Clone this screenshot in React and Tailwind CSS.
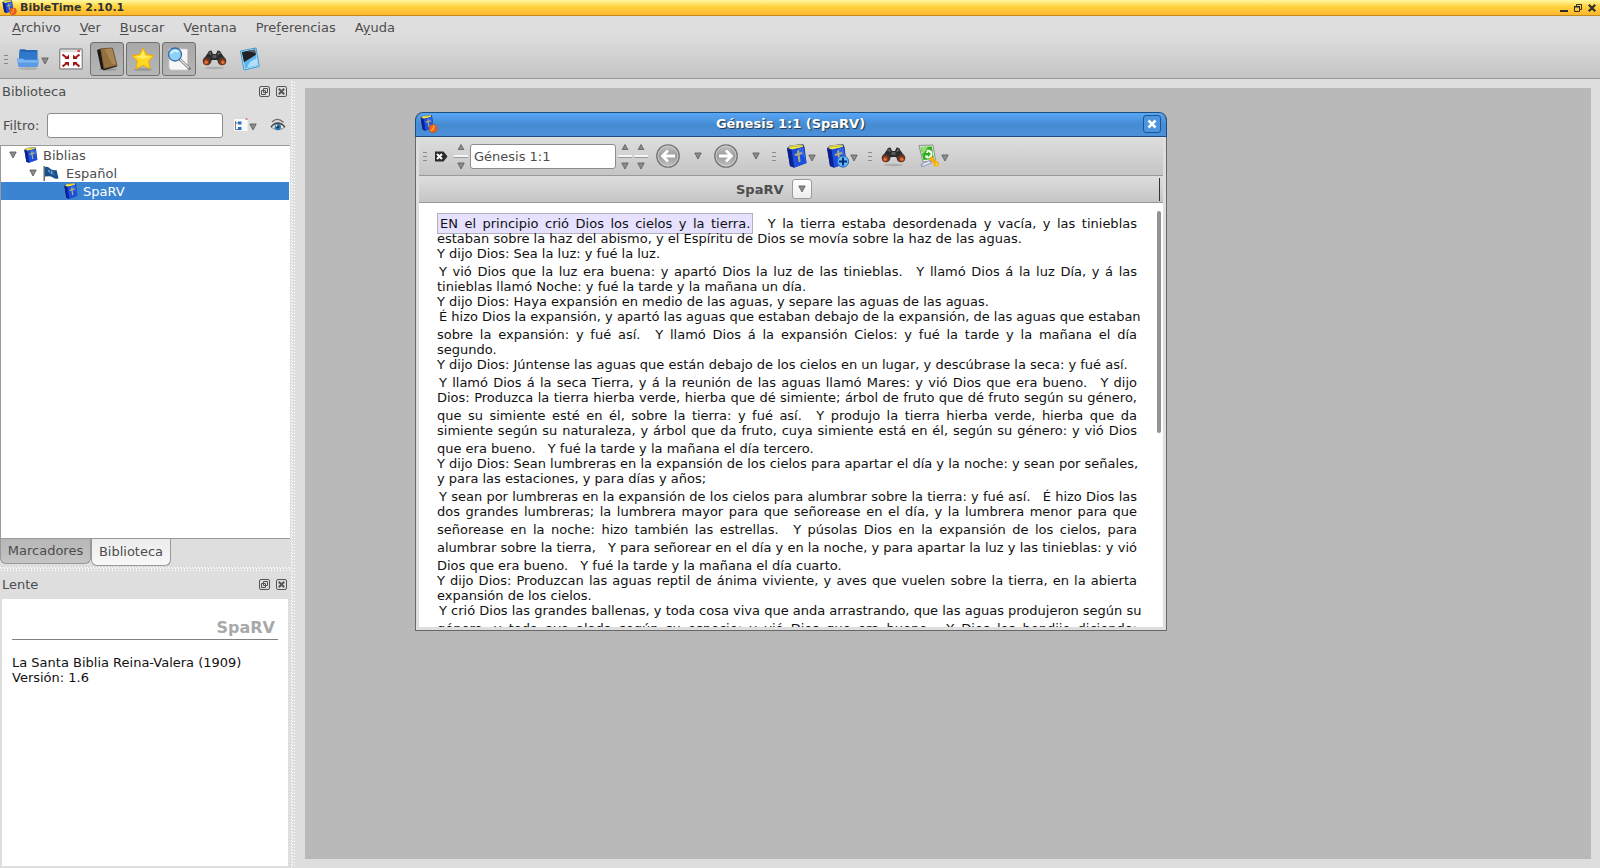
import React from "react";

function BookShape() {
  return (
    <>
      <path d="M1 4 L4 1.500 L17 0 L18.500 3 L20.500 19 L8 23.800 L4 22 Z" fill="#152a98" />
      <path d="M2 4 L4.500 1.500 L16.500 0.500 L17 3 L6 5.500 Z" fill="#f6ec4c" />
      <path d="M3.500 3.200 L16.500 1.500" stroke="#a8a23a" strokeWidth="0.700" />
      <path d="M5.500 6 L17.500 3 L20.500 19 L8 23.500 Z" fill="#1b4fdf" />
      <path d="M1 4 L5.500 6 L8 23.500 L4 22 Z" fill="#0d2190" />
      <path d="M11 5 L17.500 3.400 L19.600 15 Z" fill="#4578ee" opacity="0.550" />
      <path d="M12 6.500 L13.600 18 M8.800 11 L16.200 9" stroke="#b3ad7c" strokeWidth="2" fill="none" />
    </>
  );
}

function BookIcon({ className }) {
  return (
    <svg viewBox="0 0 22 24" className={className} aria-hidden="true">
      <BookShape />
    </svg>
  );
}

function AppIcon({ className }) {
  return (
    <svg viewBox="0 0 24 24" className={className} aria-hidden="true">
      <g transform="scale(0.88)">
        <BookShape />
      </g>
      <circle cx="17.500" cy="18" r="5.500" fill="#f0611c" stroke="#ad4f32" strokeWidth="0.800" />
      <path d="M18.500 14 L17.500 18.500 L14.500 21" stroke="#ffc23d" strokeWidth="1.500" fill="none" />
    </svg>
  );
}

function BookPlusIcon() {
  return (
    <svg viewBox="0 0 24 24" className="h-6 w-6" aria-hidden="true">
      <BookShape />
      <circle cx="17" cy="17.500" r="5.600" fill="#69b9f4" stroke="#1b65c2" />
      <path d="M17 13.500 V21.500 M13 17.500 H21" stroke="#052e7a" strokeWidth="2" />
    </svg>
  );
}

function DrawerIcon() {
  return (
    <svg viewBox="0 0 24 24" className="h-6 w-6" aria-hidden="true">
      <ellipse cx="12" cy="21.500" rx="10" ry="1.500" fill="#9d9d9d" opacity="0.600" />
      <path d="M3.500 3 Q3.500 2.300 4.500 2.300 H9 L10 3 H20.500 Q21.500 3 21.500 4 V13 H3 Z" fill="#2566b5" />
      <path d="M3.500 5 H21 V12.500 H3.300 Z" fill="#2f78cc" />
      <path d="M1 11.500 H7 L8.500 12.500 H23 L22 19 Q21.800 20 20.500 20 H3.500 Q2.400 20 2.200 19 Z" fill="#5b9be6" />
      <path d="M1.500 12 H6.700 L8.300 13.200 H22.400 L22 15.500 H2 Z" fill="#7fb5f2" />
    </svg>
  );
}

function FullscreenIcon() {
  return (
    <svg viewBox="0 0 24 22" className="h-[22px] w-6" aria-hidden="true">
      <rect x="0.700" y="1" width="22.600" height="20" rx="1" fill="#fff" stroke="#8e8e8e" strokeWidth="1.400" />
      <path d="M2 3.200 H22" stroke="#ddd" strokeWidth="2" />
      <rect x="18.500" y="2" width="2.500" height="2" fill="#d54d4d" />
      <path d="M10 6.500 V11 H5.500 Z M14 6.500 V11 H18.500 Z M10 18.500 V14 H5.500 Z M14 18.500 V14 H18.500 Z" fill="#a41313" />
      <path d="M3.500 6.500 L8.500 10.500 M20.500 6.500 L15.500 10.500 M3.500 18.500 L8.500 14.500 M20.500 18.500 L15.500 14.500" stroke="#a41313" strokeWidth="2" />
    </svg>
  );
}

function BrownBookIcon() {
  return (
    <svg viewBox="0 0 24 24" className="h-6 w-6" aria-hidden="true">
      <ellipse cx="13" cy="22.500" rx="9" ry="1.200" fill="#666" opacity="0.400" />
      <path d="M2 3 L5.500 1.800 L9 22 L6 22 Z" fill="#191613" />
      <path d="M5.500 1.800 L17.500 1 L22 18.500 L9 22 Z" fill="#96713f" stroke="#574022" strokeWidth="0.700" />
      <path d="M9.500 2 L17 1.500 L21 17.500 L17 17 Z" fill="#b6935d" opacity="0.600" />
      <path d="M6.500 22.200 L22 18.400 V19.600 L9 23.200 Z" fill="#27211b" />
    </svg>
  );
}

function StarIcon() {
  return (
    <svg viewBox="0 0 24 24" className="h-6 w-6" aria-hidden="true">
      <ellipse cx="12" cy="22.500" rx="9" ry="1.300" fill="#666" opacity="0.400" />
      <path d="M12 1 L15.300 7.500 L23 8.600 L17.600 14 L19 22 L12 18.300 L5 22 L6.400 14 L1 8.600 L8.700 7.500 Z" fill="#ffd91f" stroke="#eda90c" strokeLinejoin="round" />
      <path d="M12 3.500 L14.300 9 L20 9.800 L12 12 L4 9.500 L9.600 8.800 Z" fill="#fff176" opacity="0.800" />
    </svg>
  );
}

function MagnifierIcon() {
  return (
    <svg viewBox="0 0 24 24" className="h-6 w-6" aria-hidden="true">
      <path d="M2 2 H20.500 V23 H4 L2 21 Z" fill="#f7f7f7" stroke="#c9c9c9" strokeWidth="0.700" />
      <path d="M12.500 12 L22.500 21.500" stroke="#707070" strokeWidth="2.600" strokeLinecap="round" />
      <path d="M13 12.300 L22 21" stroke="#e8e8e8" strokeWidth="1.200" />
      <circle cx="8" cy="7.500" r="6.500" fill="#8fd0f5" stroke="#376ca8" strokeWidth="1.300" />
      <path d="M4 7 A4.500 4.500 0 0 1 11.500 5" stroke="#d9f2ff" strokeWidth="2" fill="none" />
    </svg>
  );
}

function BinocularsIcon() {
  return (
    <svg viewBox="0 0 25 22" className="h-[22px] w-[25px]" aria-hidden="true">
      <ellipse cx="12.500" cy="20" rx="10" ry="1.200" fill="#888" opacity="0.450" />
      <path d="M5.500 5.500 L7 3 L9.500 2.500 L11 6 H14 L15.500 2.500 L18 3 L19.500 5.500 L24 12 L20 15 L14.500 12 H10.500 L5 15 L1 12 Z" fill="#2b2b2b" />
      <path d="M6.500 5.500 L8.300 4.500 L9 7 M18.500 5.500 L16.700 4.500 L16 7" stroke="#777" strokeWidth="1" fill="none" />
      <rect x="10.500" y="7" width="4" height="3" fill="#585858" />
      <circle cx="5" cy="13" r="4.300" fill="#363636" />
      <circle cx="20" cy="13" r="4.300" fill="#363636" />
      <circle cx="4.500" cy="13.800" r="3.200" fill="#8c3514" />
      <circle cx="20.500" cy="13.800" r="3.200" fill="#8c3514" />
      <circle cx="4.200" cy="14.300" r="1.700" fill="#dc7440" />
      <circle cx="20.800" cy="14.300" r="1.700" fill="#dc7440" />
    </svg>
  );
}

function TiltedCardIcon() {
  return (
    <svg viewBox="0 0 22 24" className="h-6 w-[22px]" aria-hidden="true">
      <path d="M1.500 4 L17 1 L20.300 19.500 L5 23 Z" fill="#b9e2fa" stroke="#3b9bd2" strokeWidth="1" />
      <path d="M2.800 5 L16 2.500 L17 8 L5 15.500 Z" fill="#1f2328" />
      <path d="M8 4 L16 2.500 L16.600 6 Z" fill="#59636e" />
      <path d="M17 8 L5 15.500 L6 21.500 L19 18.500 Z" fill="#5eb4f0" />
      <path d="M11 15 L17.800 11 L18.800 18 L8 20.600 Z" fill="#d4f0ff" opacity="0.700" />
    </svg>
  );
}

function FlagIcon() {
  return (
    <svg viewBox="0 0 16 16" className="h-4 w-4" aria-hidden="true">
      <path d="M1.200 1 V16" stroke="#555" strokeWidth="1.300" />
      <path d="M2 2 Q5 1 7 3.500 T13.500 5 L15.500 13.500 Q12 14.500 10 12.500 T2 11.500 Z" fill="#15508c" />
      <path d="M4 4 L9 5.500 L13 11 L8 9.500 Z" fill="#3a77b3" opacity="0.700" />
      <path d="M5 5 L6.500 7.500 M9 6 L8.500 9" stroke="#a6c6e0" strokeWidth="0.800" />
    </svg>
  );
}

function ListIcon() {
  return (
    <svg viewBox="0 0 16 16" className="h-4 w-4" aria-hidden="true">
      <rect x="0.500" y="1.500" width="14.500" height="13" fill="#fafafa" stroke="#d2d2d2" strokeWidth="0.600" />
      <rect x="12.500" y="1.500" width="2" height="1.200" fill="#d94b4b" />
      <path d="M2.500 4 V12.500 H5 M2.500 6 H5" stroke="#555" strokeWidth="0.800" fill="none" />
      <rect x="5" y="4.500" width="3.500" height="3" fill="#2373cc" />
      <rect x="5" y="10" width="3.500" height="3" fill="#2373cc" />
    </svg>
  );
}

function EyeIcon() {
  return (
    <svg viewBox="0 0 16 16" className="h-4 w-4" aria-hidden="true">
      <path d="M2 5 Q7.500 -0.500 13.500 5.500" stroke="#6c6c6c" strokeWidth="1.300" fill="none" />
      <path d="M1 10 Q7.500 2 15 10 Q8 15.500 1 10 Z" fill="#e8e8e8" stroke="#777" strokeWidth="0.800" />
      <path d="M1 10 Q7.500 2 15 10" stroke="#444" strokeWidth="1.500" fill="none" />
      <circle cx="7.800" cy="10" r="3.200" fill="#2c7ab5" />
      <circle cx="7.800" cy="10" r="1.400" fill="#112c42" />
      <circle cx="6.600" cy="8.700" r="0.900" fill="#fff" />
    </svg>
  );
}

function ClearIcon() {
  return (
    <svg viewBox="0 0 14 11" className="h-[11px] w-[14px]" aria-hidden="true">
      <path d="M1 0.500 H9.500 L13.500 5.500 L9.500 10.500 H1 Z" fill="#2b2b2b" />
      <path d="M3 3 L8 8 M8 3 L3 8" stroke="#fff" strokeWidth="2" />
    </svg>
  );
}

function SyncIcon() {
  return (
    <svg viewBox="0 0 22 24" className="h-6 w-[22px]" aria-hidden="true">
      <path d="M1 1.500 L15 1 L17.500 16.500 L5 18 Z" fill="#e6eee2" stroke="#7e8a7a" strokeWidth="0.900" />
      <path d="M2.500 3 L13.800 2.500 L15.800 15 L5.500 16 Z" fill="#2fae1d" />
      <path d="M3 3 L10 2.700 L6 9 L4 10 Z" fill="#94de75" />
      <path d="M9 5.500 Q14.500 5.500 14.500 10 Q14.500 14.500 9 14.500 Q6.500 13.500 7 11.500 H10 V13 L13 10 L10 7.500 V9 H8 Z" fill="#f2fff0" />
      <path d="M4.500 21 L12 18" stroke="#9a9ac0" strokeWidth="3.800" strokeLinecap="round" />
      <path d="M4.500 21 L12 18" stroke="#eeeeff" strokeWidth="1.700" />
      <path d="M13.500 14.500 L18.500 20" stroke="#f7ae05" strokeWidth="3.600" strokeLinecap="round" />
      <circle cx="18.200" cy="20" r="2.800" fill="#f7b50c" />
      <circle cx="18.500" cy="20.300" r="0.900" fill="#ffe27a" />
    </svg>
  );
}

function NavIcon({ forward }) {
  return (
    <svg viewBox="0 0 24 24" className="h-6 w-6" aria-hidden="true">
      <defs>
        <linearGradient id="navFill" x1="0" y1="0" x2="0" y2="1">
          <stop offset="0" stopColor="#c4c4c4" />
          <stop offset="0.500" stopColor="#9b9b9b" />
          <stop offset="1" stopColor="#c4c4c4" />
        </linearGradient>
      </defs>
      <circle cx="12" cy="12" r="11.200" fill="url(#navFill)" stroke="#747474" strokeWidth="1.300" />
      <circle cx="12" cy="12" r="10" fill="none" stroke="#d5d5d5" strokeWidth="0.700" />
      <path
        d={forward ? "M5 12 H17 M12 6.500 L17.500 12 L12 17.500" : "M19 12 H7 M12 6.500 L6.500 12 L12 17.500"}
        stroke="#fff"
        strokeWidth="2.800"
        fill="none"
      />
    </svg>
  );
}

function Triangle({ up, low }) {
  return (
    <svg viewBox="0 0 8 8" className={`h-2 w-2 shrink-0 ${low ? "mt-1" : ""}`} aria-hidden="true">
      <path d={up ? "M1.200 6.500 L4 1.500 L6.800 6.500 Z" : "M0.800 1 L4 7 L7.200 1 Z"} fill="#8c8c8c" stroke="#636363" strokeWidth="0.900" />
    </svg>
  );
}

function Grip() {
  return (
    <span className="flex w-1 shrink-0 flex-col gap-[3px]">
      <span className="h-px bg-[#8a8a8a]" />
      <span className="h-px bg-[#8a8a8a]" />
      <span className="h-px bg-[#8a8a8a]" />
    </span>
  );
}

function Spinner({ label }) {
  return (
    <span className="flex w-[14px] flex-col items-center gap-1">
      <button aria-label={`${label} anterior`} className="h-2">
        <Triangle up />
      </button>
      <span className="h-[3px] w-full border-b border-[#999] bg-[#f5f5f5]" />
      <button aria-label={`${label} siguiente`} className="h-2">
        <Triangle />
      </button>
    </span>
  );
}

function SplitterDots({ vertical }) {
  const id = vertical ? "dotsV" : "dotsH";
  return (
    <svg className={vertical ? "h-full w-1" : "h-1 w-full shrink-0"} aria-hidden="true">
      <defs>
        {vertical ? (
          <pattern id={id} width="4" height="3" patternUnits="userSpaceOnUse">
            <path d="M0 0h1v1h-1z M1 1h1v1h-1z M3 1h1v1h-1z" fill="#fff" />
          </pattern>
        ) : (
          <pattern id={id} width="3" height="4" patternUnits="userSpaceOnUse">
            <path d="M0 0h1v1h-1z M1 1h1v1h-1z M1 3h1v1h-1z" fill="#fff" />
          </pattern>
        )}
      </defs>
      <rect width="100%" height="100%" fill={`url(#${id})`} />
    </svg>
  );
}

function DockTitle({ children }) {
  return (
    <div className="flex h-5 items-center justify-between pr-[3px] pl-0.5">
      <h2>{children}</h2>
      <div className="flex gap-1.5">
        <button aria-label={`Flotar ${children}`}>
          <svg viewBox="0 0 11 11" className="h-[11px] w-[11px]">
            <rect x="0.500" y="0.500" width="10" height="10" rx="1.500" fill="none" stroke="#555" />
            <path d="M4.500 2.500 H8.500 V6.500 H4.500 Z M2.500 4.500 H6.500 V8.500 H2.500 Z" fill="#dedede" stroke="#555" />
          </svg>
        </button>
        <button aria-label={`Cerrar ${children}`}>
          <svg viewBox="0 0 11 11" className="h-[11px] w-[11px]">
            <rect x="0.500" y="0.500" width="10" height="10" rx="1.500" fill="none" stroke="#555" />
            <path d="M2.800 2.800 L8.200 8.200 M8.200 2.800 L2.800 8.200" stroke="#555" strokeWidth="2" />
          </svg>
        </button>
      </div>
    </div>
  );
}

const menus = [
  ["", "A", "rchivo"],
  ["", "V", "er"],
  ["", "B", "uscar"],
  ["V", "e", "ntana"],
  ["Pre", "f", "erencias"],
  ["A", "y", "uda"],
];

// A "|" marks the point where one verse ends and the next one starts.
const lines = [
  { text: "EN el principio crió Dios los cielos y la tierra.|Y la tierra estaba desordenada y vacía, y las tinieblas", kind: "first" },
  { text: "estaban sobre la haz del abismo, y el Espíritu de Dios se movía sobre la haz de las aguas.", end: true },
  { text: "Y dijo Dios: Sea la luz: y fué la luz.", end: true },
  { text: "Y vió Dios que la luz era buena: y apartó Dios la luz de las tinieblas.|Y llamó Dios á la luz Día, y á las", kind: "indent" },
  { text: "tinieblas llamó Noche: y fué la tarde y la mañana un día.", end: true },
  { text: "Y dijo Dios: Haya expansión en medio de las aguas, y separe las aguas de las aguas.", end: true },
  { text: "É hizo Dios la expansión, y apartó las aguas que estaban debajo de la expansión, de las aguas que estaban", kind: "shift" },
  { text: "sobre la expansión: y fué así.|Y llamó Dios á la expansión Cielos: y fué la tarde y la mañana el día" },
  { text: "segundo.", end: true },
  { text: "Y dijo Dios: Júntense las aguas que están debajo de los cielos en un lugar, y descúbrase la seca: y fué así.", end: true },
  { text: "Y llamó Dios á la seca Tierra, y á la reunión de las aguas llamó Mares: y vió Dios que era bueno.|Y dijo", kind: "indent" },
  { text: "Dios: Produzca la tierra hierba verde, hierba que dé simiente; árbol de fruto que dé fruto según su género," },
  { text: "que su simiente esté en él, sobre la tierra: y fué así.|Y produjo la tierra hierba verde, hierba que da" },
  { text: "simiente según su naturaleza, y árbol que da fruto, cuya simiente está en él, según su género: y vió Dios" },
  { text: "que era bueno.|Y fué la tarde y la mañana el día tercero.", end: true },
  { text: "Y dijo Dios: Sean lumbreras en la expansión de los cielos para apartar el día y la noche: y sean por señales," },
  { text: "y para las estaciones, y para días y años;", end: true },
  { text: "Y sean por lumbreras en la expansión de los cielos para alumbrar sobre la tierra: y fué así.|É hizo Dios las", kind: "indent" },
  { text: "dos grandes lumbreras; la lumbrera mayor para que señorease en el día, y la lumbrera menor para que" },
  { text: "señorease en la noche: hizo también las estrellas.|Y púsolas Dios en la expansión de los cielos, para" },
  { text: "alumbrar sobre la tierra,|Y para señorear en el día y en la noche, y para apartar la luz y las tinieblas: y vió" },
  { text: "Dios que era bueno.|Y fué la tarde y la mañana el día cuarto.", end: true },
  { text: "Y dijo Dios: Produzcan las aguas reptil de ánima viviente, y aves que vuelen sobre la tierra, en la abierta" },
  { text: "expansión de los cielos.", end: true },
  { text: "Y crió Dios las grandes ballenas, y toda cosa viva que anda arrastrando, que las aguas produjeron según su", kind: "shift" },
  { text: "género, y toda ave alada según su especie: y vió Dios que era bueno.|Y Dios los bendijo diciendo:" },
];

const kindClass = {
  first: "",
  indent: "pt-[3px] pl-0.5",
  shift: "pl-0.5",
};

function VerseLine({ text, kind, end }) {
  const [head, tail] = text.split("|");
  const spacing = kind ? kindClass[kind] : tail ? "pt-[3px]" : "";
  return (
    <div className={`whitespace-nowrap text-justify ${end ? "" : "[text-align-last:justify]"} ${spacing}`}>
      {kind === "first" ? (
        <span className="border border-[#b3b0bd] bg-[#e6e1ff] px-0.5 py-0.5">{head}</span>
      ) : (
        head
      )}
      {tail && (
        <>
          {" "}
          <span className="inline-block w-2" />
          {tail}
        </>
      )}
    </div>
  );
}

function TextWindow() {
  return (
    <section
      aria-label="Génesis 1:1 (SpaRV)"
      className="absolute top-6 left-[110px] flex h-[519px] w-[752px] flex-col rounded-t-lg border border-[#676767] border-t-[#1d4e80] bg-[#dedede]"
    >
      <header className="-mx-px flex h-6 shrink-0 items-center rounded-t-lg border-x border-b border-[#1d4e80] bg-linear-to-b from-[#58a6f6] via-[#468cd3] to-[#4b90d8] pr-[5px] pb-0.5 pl-1">
        <AppIcon className="h-[18px] w-[18px]" />
        <h1 className="flex-1 text-center font-bold text-white [text-shadow:1px_1px_1px_#234]">Génesis 1:1 (SpaRV)</h1>
        <button aria-label="Cerrar ventana" className="flex h-[18px] w-[18px] items-center justify-center rounded-[3px] border border-[#1d5590] bg-[#4d95df]">
          <svg viewBox="0 0 10 10" className="h-[10px] w-[10px]">
            <path d="M1.500 1.500 L8.500 8.500 M8.500 1.500 L1.500 8.500" stroke="#fff" strokeWidth="2.600" />
          </svg>
        </button>
      </header>
      <div className="mx-[3px] mb-[3px] flex min-h-0 flex-1 flex-col bg-white">
        <div className="flex h-[39px] shrink-0 items-center border-b border-[#999] bg-linear-to-b from-[#dedede] to-[#c5c5c5] pl-1">
          <Grip />
          <button aria-label="Borrar" className="ml-[7px]">
            <ClearIcon />
          </button>
          <span className="ml-1.5">
            <Spinner label="Libro" />
          </span>
          <input
            aria-label="Referencia"
            defaultValue="Génesis 1:1"
            className="ml-0.5 h-[25px] w-[146px] rounded-[3px] border border-[#8c8c8c] bg-white px-[3px] text-[#4d4d4d] outline-none"
          />
          <span className="ml-0.5 flex gap-0.5">
            <Spinner label="Capítulo" />
            <Spinner label="Versículo" />
          </span>
          <button aria-label="Atrás" className="ml-2">
            <NavIcon />
          </button>
          <button aria-label="Historial atrás" className="ml-[14px]">
            <Triangle />
          </button>
          <button aria-label="Adelante" className="ml-3">
            <NavIcon forward />
          </button>
          <button aria-label="Historial adelante" className="ml-[14px]">
            <Triangle />
          </button>
          <span className="ml-3">
            <Grip />
          </span>
          <button aria-label="Obra" className="ml-2.5 flex items-center">
            <BookIcon className="h-6 w-[22px]" />
            <Triangle low />
          </button>
          <button aria-label="Añadir obra" className="ml-2.5 flex items-center">
            <BookPlusIcon />
            <Triangle low />
          </button>
          <span className="ml-2.5">
            <Grip />
          </span>
          <button aria-label="Buscar" className="ml-[9px]">
            <BinocularsIcon />
          </button>
          <button aria-label="Sincronizar" className="ml-3 flex items-center gap-px">
            <SyncIcon />
            <Triangle low />
          </button>
        </div>
        <div className="flex h-[27px] shrink-0 items-center justify-center border-b border-[#999] bg-linear-to-b from-[#dedede] to-[#c5c5c5] pl-6">
          <span className="flex-1 text-right font-bold">SpaRV</span>
          <button aria-label="Elegir obra" className="mx-2 flex h-5 w-5 items-center justify-center rounded-[3px] border border-[#9a9a9a] bg-linear-to-b from-white to-[#eee]">
            <Triangle />
          </button>
          <span className="flex flex-1 justify-end pr-[3px]">
            <span className="h-[23px] w-px bg-[#333]" />
          </span>
        </div>
        <div className="flex min-h-0 flex-1 justify-between">
          <article className="min-w-0 flex-1 overflow-hidden pt-[13px] pr-5 pl-[18px] leading-[15px] text-[#111]">
            {lines.map((line) => (
              <VerseLine key={line.text} {...line} />
            ))}
          </article>
          <div className="mt-2 mr-0.5 h-[222px] w-1 rounded-full bg-[#939393]" />
        </div>
      </div>
    </section>
  );
}

const toggleClass =
  "flex h-[34px] w-[34px] items-center justify-center rounded-[3px] border border-[#707070] bg-linear-to-b from-[#a8a8a8] to-[#b6b6b6]";

export default function App() {
  return (
    <div className="flex h-screen min-w-0 flex-col bg-[#dedede] font-['DejaVu_Sans',sans-serif] text-[13px] leading-[15px] text-[#4d4d4d]">
      <header className="flex h-4 shrink-0 items-center border-b border-[#c08a1c] bg-linear-to-b from-[#fff9a0] via-[#ffd640] via-40% to-[#ffb52e] pr-1 pl-0.5 text-[11px] text-[#333]">
        <AppIcon className="h-[15px] w-[15px]" />
        <span className="ml-[3px] flex-1 font-bold">BibleTime 2.10.1</span>
        <div className="flex items-center gap-1.5">
          <button aria-label="Minimizar">
            <svg viewBox="0 0 8 8" className="h-2 w-2">
              <path d="M0 6 H8 V8 H0 Z" fill="#2d2d2d" />
            </svg>
          </button>
          <button aria-label="Restaurar">
            <svg viewBox="0 0 8 8" className="h-2 w-2">
              <path d="M2.500 2 V0.500 H7.500 V5.500 H6 M0.500 3 H5.500 V7.500 H0.500 Z M0 2.500 H6" fill="none" stroke="#2d2d2d" />
            </svg>
          </button>
          <button aria-label="Cerrar">
            <svg viewBox="0 0 8 8" className="h-2 w-2">
              <path d="M0.800 0.800 L7.200 7.200 M7.200 0.800 L0.800 7.200" stroke="#2d2d2d" strokeWidth="2.200" />
            </svg>
          </button>
        </div>
      </header>

      <div className="shrink-0 border-b border-[#979797] bg-linear-to-b from-[#dedede] from-30% to-[#c4c4c4]">
        <nav className="flex h-6 items-center gap-[19px] px-3 pb-0.5">
          {menus.map(([before, key, after]) => (
            <button key={before + key + after}>
              {before}
              <span className="underline underline-offset-2">{key}</span>
              {after}
            </button>
          ))}
        </nav>
        <div className="flex h-[38px] items-center pl-1">
          <Grip />
          <button aria-label="Abrir obra" className="ml-2 flex items-center gap-px">
            <DrawerIcon />
            <Triangle low />
          </button>
          <button aria-label="Pantalla completa" className="ml-2.5">
            <FullscreenIcon />
          </button>
          <div className="ml-[7px] flex gap-0.5">
            <button aria-label="Biblioteca" aria-pressed="true" className={toggleClass}>
              <BrownBookIcon />
            </button>
            <button aria-label="Marcadores" aria-pressed="true" className={toggleClass}>
              <StarIcon />
            </button>
            <button aria-label="Lente" aria-pressed="true" className={toggleClass}>
              <MagnifierIcon />
            </button>
          </div>
          <button aria-label="Buscar en obras" className="ml-1.5">
            <BinocularsIcon />
          </button>
          <button aria-label="Manual" className="ml-3">
            <TiltedCardIcon />
          </button>
        </div>
      </div>

      <div className="flex min-h-0 flex-1">
        <aside className="flex w-[290px] shrink-0 flex-col pt-0.5">
          <DockTitle>Biblioteca</DockTitle>
          <div className="flex h-11 shrink-0 items-center pt-1 pl-[3px]">
            <label htmlFor="filter" className="w-11">
              Fi<span className="underline underline-offset-2">l</span>tro:
            </label>
            <input id="filter" className="h-[25px] w-[176px] rounded-[3px] border border-[#8c8c8c] bg-white px-1 outline-none" />
            <button aria-label="Agrupar" className="ml-2.5 flex items-center">
              <ListIcon />
              <Triangle low />
            </button>
            <button aria-label="Mostrar" className="ml-[13px]">
              <EyeIcon />
            </button>
          </div>
          <ul className="h-[394px] shrink-0 border border-r-0 border-[#999] bg-white [&>li]:flex [&>li]:h-[18px] [&>li]:items-center">
            <li className="pl-2">
              <Triangle />
              <BookIcon className="ml-1.5 h-4 w-4" />
              <span className="ml-1">Biblias</span>
            </li>
            <li className="pl-7">
              <Triangle />
              <span className="mr-[7px] ml-1.5">
                <FlagIcon />
              </span>
              Español
            </li>
            <li className="mr-px bg-[#3b84d1] pl-[62px] text-white">
              <BookIcon className="h-4 w-4" />
              <span className="ml-1">SpaRV</span>
            </li>
          </ul>
          <div className="flex h-7 shrink-0 items-start">
            <button className="h-[25px] w-[91px] rounded-b-md border border-t-0 border-[#999] bg-linear-to-b from-[#b6b6b6] to-[#c5c5c5] pb-0.5">Marcadores</button>
            <button className="h-[27px] w-20 rounded-b-md border border-t-0 border-[#999] bg-linear-to-b from-[#ececec] to-[#f8f8f8] pb-0.5">Biblioteca</button>
          </div>
          <SplitterDots />
          <div className="mt-[3px] shrink-0">
            <DockTitle>Lente</DockTitle>
          </div>
          <div className="mx-0.5 mt-[5px] mb-0.5 flex-1 bg-white px-2.5 pt-5 text-[#111]">
            <h3 className="border-b border-[#808080] pr-[3px] pb-[3px] text-right text-base leading-[17px] font-bold text-[#a9a9a9]">SpaRV</h3>
            <p className="mt-[15px]">
              La Santa Biblia Reina-Valera (1909)
              <br />
              Versión: 1.6
            </p>
          </div>
        </aside>
        <div className="w-[15px] shrink-0 pt-0.5 pl-px">
          <SplitterDots vertical />
        </div>
        <main className="relative mt-[9px] mr-[9px] mb-[9px] min-w-0 flex-1 overflow-hidden bg-[#b9b9b9]">
          <TextWindow />
        </main>
      </div>
    </div>
  );
}
